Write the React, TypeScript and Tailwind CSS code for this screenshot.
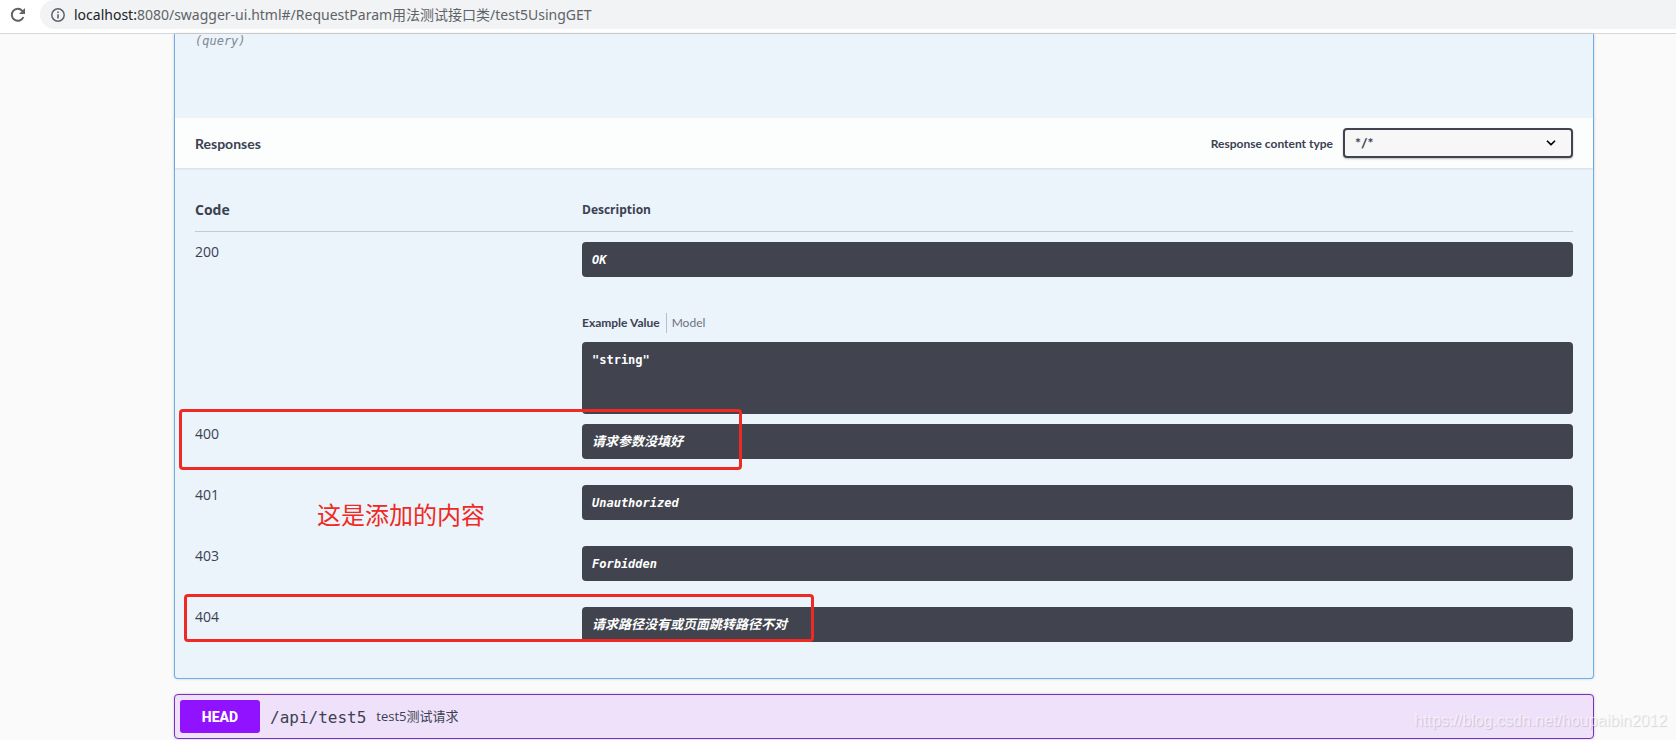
import { ChevronDown } from "lucide-react";

type Response = {
  code: string;
  description: string;
  example?: string;
  chinese?: boolean;
};

const responses: Response[] = [
  { code: "200", description: "OK", example: '"string"' },
  { code: "400", description: "请求参数没填好", chinese: true },
  { code: "401", description: "Unauthorized" },
  { code: "403", description: "Forbidden" },
  { code: "404", description: "请求路径没有或页面跳转路径不对", chinese: true },
];

const AddressBar = () => {
  return (
    <header className="flex h-[34px] items-start border-b border-[#d5d7da] bg-white font-['Noto_Sans','Noto_Sans_CJK_SC',sans-serif]">
      <button aria-label="Reload" className="ml-[10px] mt-[7px] text-[#5f6368]">
        <svg width="16" height="16" viewBox="0 0 16 16" fill="none">
          <path d="M13.4 10A6 6 0 1 1 12.3 3.8L14 5.5" stroke="currentColor" strokeWidth="2" />
          <path d="M15 1v6H9z" fill="currentColor" />
        </svg>
      </button>
      <div className="ml-[14px] flex h-[29px] flex-1 items-center rounded-l-full bg-[#f1f3f4] pl-[11px]">
        <svg width="14" height="14" viewBox="0 0 14 14" fill="none" className="text-[#5f6368]">
          <circle cx="7" cy="7" r="6.2" stroke="currentColor" strokeWidth="1.5" />
          <path d="M7 6.2v4.3M7 3.4v1.5" stroke="currentColor" strokeWidth="1.6" />
        </svg>
        <span className="ml-[9px] whitespace-nowrap text-sm text-[#5f6368]">
          <span className="text-[#202124]">localhost:</span>
          8080/swagger-ui.html#/RequestParam用法测试接口类/test5UsingGET
        </span>
      </div>
    </header>
  );
};

const ResponseRow = ({ code, description, example, chinese }: Response) => {
  return (
    <tr className="align-top">
      <td className="pt-[10px] text-sm leading-5">{code}</td>
      <td className="pt-[10px] font-['DejaVu_Sans_Mono','Noto_Sans_CJK_SC',monospace] text-xs font-bold text-white">
        <div
          className={`h-[35px] rounded bg-[#41444e] px-[10px] italic ${chinese ? "text-[13px] leading-[35px]" : "text-xs leading-[37px]"}`}
        >
          {description}
        </div>
        {example ? (
          <>
            <div className="mt-9 flex h-5 items-center font-['Lato',sans-serif] text-[#3b4151]">
              <button className="h-5 border-r border-[#b9bfc8] pr-[6px] font-bold">Example Value</button>
              <button className="pl-[5px] font-normal text-[#6b7280]">Model</button>
            </div>
            <pre className="mt-[9px] h-[72px] rounded bg-[#41444e] p-[10px] font-['DejaVu_Sans_Mono',monospace] leading-4">
              {example}
            </pre>
          </>
        ) : (
          <div className="h-4" />
        )}
      </td>
    </tr>
  );
};

const App = () => {
  return (
    <div className="relative overflow-hidden bg-[#fafafa] pb-px text-[#3b4151]">
      <AddressBar />
      <main className="pl-[174px] pr-[82px] font-['Open_Sans','Noto_Sans_CJK_SC',sans-serif]">
        <section className="rounded-b border border-t-0 border-[#6faee6] bg-[#ebf3fb] shadow-[0_0_3px_rgba(0,0,0,0.19)]">
          <div className="h-[84px] px-5 font-['DejaVu_Sans_Mono',monospace] text-xs italic leading-[14px] text-[#808890]">
            (query)
          </div>
          <div className="flex h-[50px] items-center justify-between bg-[#fcfefe] px-5 font-['Lato',sans-serif] shadow-[0_1px_2px_rgba(0,0,0,0.1)]">
            <h4 className="pt-[2px] text-sm font-bold">Responses</h4>
            <div className="flex items-center">
              <label htmlFor="content-type" className="pr-[10px] pt-[2px] text-xs font-bold">
                Response content type
              </label>
              <div className="relative">
                <select
                  id="content-type"
                  className="h-[30px] w-[230px] appearance-none rounded border-2 border-[#41444e] bg-[#f7f7f7] px-[10px] text-sm font-bold leading-5 shadow-[0_1px_2px_rgba(0,0,0,0.25)]"
                >
                  <option>*/*</option>
                </select>
                <ChevronDown className="pointer-events-none absolute right-[15px] top-2 size-[14px] text-black" strokeWidth={3} />
              </div>
            </div>
          </div>
          <div className="px-5 pb-5 pt-[30px]">
            <table className="w-full border-separate border-spacing-0">
              <thead>
                <tr className="text-left">
                  <th className="h-[34px] w-[387px] border-b border-[#c3c9d5] pb-[9px] text-sm font-bold leading-5">Code</th>
                  <th className="h-[34px] border-b border-[#c3c9d5] pb-[9px] text-xs font-bold leading-5">Description</th>
                </tr>
              </thead>
              <tbody>
                {responses.map((response) => (
                  <ResponseRow key={response.code} {...response} />
                ))}
              </tbody>
            </table>
          </div>
        </section>

        <section className="mt-[15px] flex h-[45px] items-center rounded border border-[#7d2bc4] bg-[#f0e1fb] px-[5px] shadow-[0_0_3px_rgba(0,0,0,0.19)]">
          <button className="h-[33px] w-20 rounded-[3px] bg-[#9012fe] pt-px font-['Roboto',sans-serif] text-sm font-extrabold text-white">
            HEAD
          </button>
          <a href="#test5" className="px-[10px] pt-[2px] font-['DejaVu_Sans_Mono',monospace] text-base">
            /api/test5
          </a>
          <span className="pt-px text-[13px]">test5测试请求</span>
        </section>
      </main>

      {/* annotations over the page */}
      <div className="absolute left-[179px] top-[409px] h-[61px] w-[563px] rounded border-[3px] border-[#ee2a22]" />
      <div className="absolute left-[184px] top-[594px] h-12 w-[630px] rounded border-[3px] border-[#ee2a22]" />
      <p className="absolute left-[317px] top-[498px] font-['Noto_Sans_CJK_SC',sans-serif] text-2xl leading-8 text-[#ee2a22]">
        这是添加的内容
      </p>
      <p className="absolute bottom-[9px] right-[9px] font-['Liberation_Sans',sans-serif] text-base leading-5 text-white/60 [text-shadow:1px_1px_1px_rgba(0,0,0,0.15)]">
        https://blog.csdn.net/houpaibin2012
      </p>
    </div>
  );
};

export default App;
